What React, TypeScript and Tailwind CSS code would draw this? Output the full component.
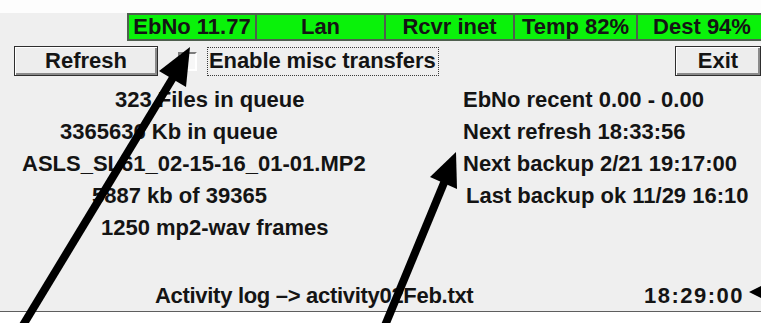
import React from "react";

const cells = [
  { t: "EbNo 11.77", w: "w-[128px]" },
  { t: "Lan", w: "w-[129px]" },
  { t: "Rcvr inet", w: "w-[129px]" },
  { t: "Temp 82%", w: "w-[123px]" },
  { t: "Dest 94%", w: "w-[130px]" },
];

export default function App() {
  return (
    <div className="relative w-[761px] h-[323px] overflow-hidden bg-white font-['Liberation_Sans',Arial,sans-serif] font-bold text-[22px] text-[#141414] leading-none whitespace-nowrap">
      <div className="h-[13px] bg-[#fdfdfd]" />
      <div className="flex flex-col h-[299px] bg-[#efefef] border-b border-[#5e5e5e]">
        {/* status bar */}
        <div className="flex ml-[127px] h-[28px] border-y-2 border-l-2 border-[#4f5f4f] bg-[#0af20a]">
          {cells.map((c) => (
            <div key={c.t} className={`${c.w} shrink-0 flex items-center justify-center border-r-2 border-[#4f5f4f]`}>
              {c.t}
            </div>
          ))}
        </div>
        {/* controls */}
        <div className="flex items-center mt-[5px] h-[30px]">
          <div className="ml-[14px] w-[144px] h-[30px] flex items-center justify-center border border-[#2e2e2e] bg-[#ededed] shadow-[inset_1px_1px_0_#ffffff,inset_-2px_-2px_0_#8a8a8a]">
            Refresh
          </div>
          <div className="ml-[20px] w-[19px] h-[19px] border-2 border-t-[#7c7c7c] border-l-[#7c7c7c] border-r-[#ffffff] border-b-[#ffffff] bg-[#f7f7f7]" />
          <div className="ml-[10px] w-[232px] h-[29px] flex items-center pl-[1px] border border-dotted border-[#3a3a3a] tracking-[-0.1px]">
            Enable misc transfers
          </div>
          <div className="ml-auto w-[86px] h-[30px] flex items-center justify-center border border-[#2e2e2e] bg-[#ededed] shadow-[inset_1px_1px_0_#ffffff,inset_-2px_-2px_0_#8a8a8a]">
            Exit
          </div>
        </div>
        {/* info rows */}
        <div className="flex mt-[8px]">
          <div className="w-[463px] shrink-0 flex flex-col">
            <div className="h-[32px] flex items-center pl-[115px]">323 Files in queue</div>
            <div className="h-[32px] flex items-center pl-[60px]">3365636 Kb in queue</div>
            <div className="h-[32px] flex items-center pl-[22px]">ASLS_SL61_02-15-16_01-01.MP2</div>
            <div className="h-[32px] flex items-center pl-[92px]">5887 kb of 39365</div>
            <div className="h-[32px] flex items-center pl-[101px]">1250 mp2-wav frames</div>
          </div>
          <div className="flex flex-col">
            <div className="h-[32px] flex items-center">EbNo recent 0.00 - 0.00</div>
            <div className="h-[32px] flex items-center">Next refresh 18:33:56</div>
            <div className="h-[32px] flex items-center">Next backup 2/21 19:17:00</div>
            <div className="h-[32px] flex items-center pl-[3px]">Last backup ok 11/29 16:10</div>
          </div>
        </div>
        {/* bottom row */}
        <div className="mt-auto h-[30px] flex items-center">
          <div className="ml-[155px] tracking-[-0.3px]">Activity log –&gt; activity02Feb.txt</div>
          <div className="ml-auto mr-[17px] tracking-[1.5px]">18:29:00</div>
        </div>
      </div>

      {/* annotation arrows */}
      <svg className="absolute inset-0 pointer-events-none" width="761" height="323" viewBox="0 0 761 323">
        <line x1="14" y1="340" x2="174" y2="76" stroke="#000" strokeWidth="8" />
        <polygon points="190,47 159,71 186,87" fill="#000" />
        <line x1="379" y1="340" x2="446" y2="178" stroke="#000" strokeWidth="8" />
        <polygon points="456,152 430,177 457,189" fill="#000" />
        <polygon points="749,292 761,286 761,298" fill="#000" />
      </svg>
    </div>
  );
}
